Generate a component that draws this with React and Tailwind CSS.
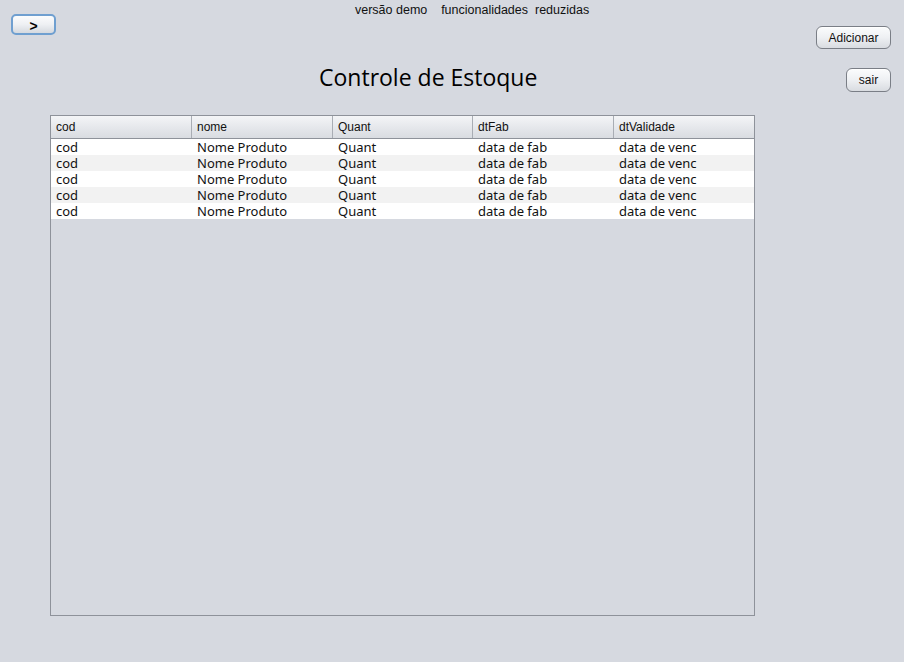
import React from "react";

const rows = [0, 1, 2, 3, 4];
const headers = ["cod", "nome", "Quant", "dtFab", "dtValidade"];
const cells = ["cod", "Nome Produto", "Quant", "data de fab", "data de venc"];
const cols = "grid grid-cols-[141px_141px_140px_141px_1fr]";

function NimbusButton({ children, className = "" }) {
  return (
    <button
      className={
        "flex items-center justify-center rounded-[6px] border border-[#7a7e86] bg-gradient-to-b from-[#fbfcfd] via-[#eef0f3] to-[#d9dce1] text-[12px] text-[#111] shadow-[inset_0_1px_0_#ffffff] " +
        className
      }
      style={{ fontFamily: '"Liberation Sans", Arial, sans-serif' }}
    >
      {children}
    </button>
  );
}

export default function App() {
  return (
    <div className="w-[904px] h-[662px] bg-[#d6d9e0] overflow-hidden flex flex-col">
      <div className="flex items-start h-[115px]">
        <div className="w-[60px] pl-[11px] pt-[14px]">
          <button
            className="w-[45px] h-[21px] rounded-[5px] border-2 border-[#6f9fd0] bg-gradient-to-b from-[#fbfcfd] via-[#eef0f3] to-[#d5d9df] flex items-center justify-center text-[14px] font-bold text-black"
            style={{ fontFamily: '"Liberation Sans", Arial, sans-serif' }}
          >
            <span className="leading-none mt-[2px]">&gt;</span>
          </button>
        </div>
        <div className="flex-1 flex flex-col">
          <div
            className="pt-[3px] pl-[295px] text-[12.5px] leading-[14px] text-[#111] whitespace-pre"
            style={{ fontFamily: '"Liberation Sans", Arial, sans-serif' }}
          >
            {"versão demo    funcionalidades  reduzidas"}
          </div>
          <div
            className="mt-[47px] pl-[259px] text-[23px] leading-[27px] text-black"
            style={{ fontFamily: '"Open Sans", "Noto Sans", sans-serif' }}
          >
            Controle de Estoque
          </div>
        </div>
        <div className="w-[90px] pr-[13px] pt-[26px] flex flex-col items-end">
          <NimbusButton className="w-[75px] h-[23px]">Adicionar</NimbusButton>
          <NimbusButton className="w-[45px] h-[24px] mt-[19px]">sair</NimbusButton>
        </div>
      </div>

      <div className="ml-[50px] w-[705px] h-[501px] border border-[#8e929a] bg-[#d6d9e0] flex flex-col">
        <div
          className={cols + " h-[23px] border-b border-[#8e929a] bg-gradient-to-b from-[#f4f5f7] via-[#e6e8ec] to-[#d9dce1] text-[12px] text-[#111]"}
          style={{ fontFamily: '"Liberation Sans", Arial, sans-serif' }}
        >
          {headers.map((h, i) => (
            <div
              key={h}
              className={
                "flex items-center pl-[5px] " +
                (i < 4 ? "border-r border-[#a9adb4]" : "")
              }
            >
              {h}
            </div>
          ))}
        </div>
        <div style={{ fontFamily: '"Noto Sans", "Open Sans", sans-serif' }}>
          {rows.map((r) => (
            <div
              key={r}
              className={
                cols + " h-[16px] text-[13px] leading-[16px] text-[#111] overflow-hidden " +
                (r % 2 === 0 ? "bg-white" : "bg-[#f2f2f2]")
              }
            >
              {cells.map((c, i) => (
                <div key={i} className="pl-[5px] h-[16px] whitespace-nowrap overflow-hidden">
                  {c}
                </div>
              ))}
            </div>
          ))}
        </div>
      </div>
    </div>
  );
}
